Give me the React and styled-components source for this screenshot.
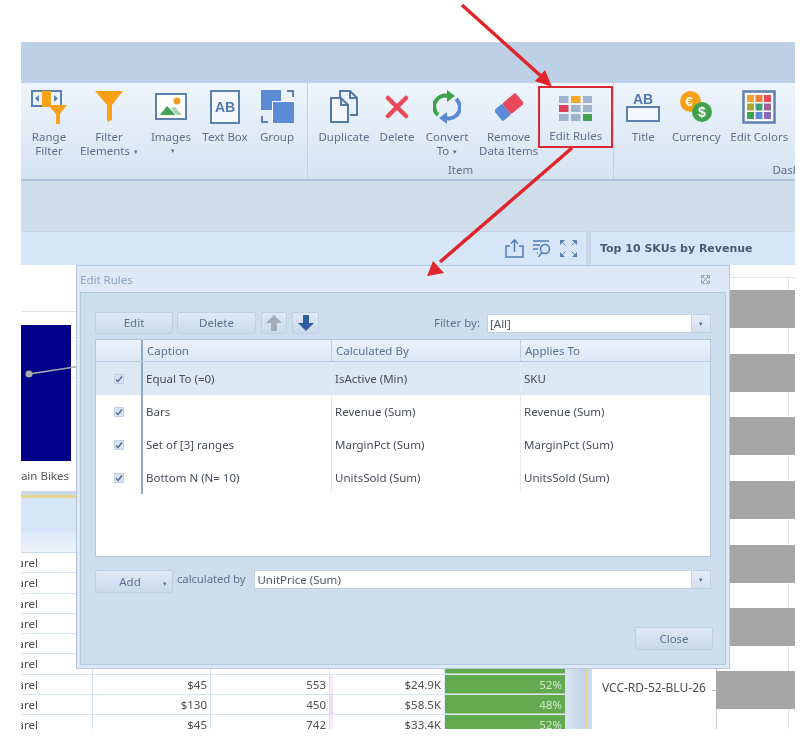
import React from "react";
import styled, { createGlobalStyle } from "styled-components";

const GlobalStyle = createGlobalStyle`
  html, body {
    margin: 0;
    background: #fff;
  }
  svg {
    display: block;
  }
`;

const FONT = `"Noto Sans", "Open Sans", sans-serif`;

const Page = styled.div`
  position: relative;
  width: 802px;
  height: 751px;
  padding: 42px 7px 22px 21px;
  box-sizing: border-box;
  overflow: hidden;
  background: #fff;
  font-family: ${FONT};
  font-size: 11.5px;
  filter: blur(0.4px);
`;
const Screen = styled.div`
  width: 774px;
  height: 687px;
  overflow: hidden;
  display: flex;
  flex-direction: column;
`;
const TitleBand = styled.div`
  flex: 0 0 41px;
  background: #bdd0e5;
`;
const Ribbon = styled.div`
  flex: 0 0 98px;
  box-sizing: border-box;
  display: flex;
  background: linear-gradient(#eef5fd, #d5e3f1);
  border-bottom: 2px solid #afc2d7;
`;
const Group = styled.div`
  flex: 0 0 ${({ $w }) => $w}px;
  box-sizing: border-box;
  display: flex;
  flex-direction: column;
  border-right: ${({ $open }) => ($open ? "none" : "1px solid #c3d3e4")};
`;
const Tools = styled.div`
  flex: 0 0 79px;
  display: flex;
  padding-left: ${({ $pad }) => $pad || 0}px;
`;
const Tool = styled.div`
  flex: 0 0 ${({ $w }) => $w}px;
  margin-left: ${({ $gap }) => $gap || 0}px;
  margin-top: ${({ $marked }) => ($marked ? 3 : 0)}px;
  height: ${({ $marked }) => ($marked ? "62px" : "auto")};
  box-sizing: border-box;
  border: ${({ $marked }) => ($marked ? "2px solid #dc2a35" : "none")};
  display: flex;
  flex-direction: column;
  align-items: center;
  color: #5f6f8a;
  line-height: 14px;
  text-align: center;
  white-space: nowrap;
`;
const ToolIcon = styled.div`
  height: ${({ $marked }) => ($marked ? 41 : 47)}px;
  display: flex;
  align-items: center;
  justify-content: center;
`;
const Caret = styled.span`
  font-size: 7px;
  margin-left: 4px;
  vertical-align: 1px;
`;
const GroupLabel = styled.div`
  text-align: center;
  color: #5f6f8a;
  line-height: 16px;
`;
const Band = styled.div`
  flex: 0 0 50px;
  background: #cfdcea;
`;
const Headers = styled.div`
  flex: 0 0 34px;
  display: flex;
  gap: 5px;
  background: #c9d9ea;
`;
const LeftHeader = styled.div`
  flex: 0 0 565px;
  box-sizing: border-box;
  padding-right: 9px;
  display: flex;
  align-items: center;
  justify-content: flex-end;
  gap: 8px;
  background: #d6e5f8;
  border-top: 1px solid #c5d5e7;
`;
const RightHeader = styled.div`
  flex: 1;
  box-sizing: border-box;
  padding-left: 9px;
  display: flex;
  align-items: center;
  background: #d6e5f8;
  border-top: 1px solid #c5d5e7;
  font-family: "DejaVu Sans", sans-serif;
  font-size: 11px;
  font-weight: 700;
  color: #4b5a72;
`;
const Panels = styled.div`
  flex: 1;
  display: flex;
  min-height: 0;
`;
const LeftPanel = styled.div`
  flex: 0 0 571px;
  display: flex;
  flex-direction: column;
`;
const ChartBox = styled.div`
  flex: 0 0 226px;
  position: relative;
  background: #fff;
  border-bottom: 4px solid #ccd9e8;
  box-sizing: content-box;
`;
const AxisLabel = styled.div`
  position: absolute;
  left: 0;
  width: 48px;
  top: 204px;
  overflow: hidden;
  direction: rtl;
  white-space: nowrap;
  color: #555;
  font-size: 11.5px;
  line-height: 14px;
`;
const GridFrame = styled.div`
  flex: 1;
  min-height: 0;
  display: flex;
  flex-direction: column;
  border-top: 3px solid #e8d58e;
  border-right: 2px solid #e8d58e;
  margin-right: 4px;
  overflow: hidden;
  box-shadow: 4px 0 0 #c9daec;
`;
const GridTitle = styled.div`
  flex: 0 0 34px;
  background: #d6e5f8;
`;
const GridHead = styled.div`
  flex: 0 0 21px;
  background: linear-gradient(#dde9f8, #edf3fb);
  border-bottom: 1px solid #c8d8ea;
  box-sizing: border-box;
`;
const GridBody = styled.div`
  flex: 1;
  display: flex;
  min-height: 0;
`;
const GridRows = styled.div`
  flex: 0 0 544px;
`;
const GridScroll = styled.div`
  flex: 1;
  background: linear-gradient(90deg, #d8e4f1, #c3d5e8);
`;
const DataRow = styled.div`
  height: 20.3px;
  box-sizing: border-box;
  display: grid;
  grid-template-columns: 72px 118px 119px 115px 120px;
  border-bottom: 1px solid #d8e4f7;
  color: #4d4d4d;
  font-size: 11.5px;
  line-height: 19px;
`;
const Cell = styled.div`
  position: relative;
  padding-right: 3px;
  text-align: right;
  border-right: 1px solid #d8e4f7;
  overflow: hidden;
  white-space: nowrap;
`;
const ClipCell = styled(Cell)`
  text-align: left;
  padding: 0;
  text-indent: -25px;
`;
const Bar = styled.i`
  position: absolute;
  left: 0;
  top: 0;
  bottom: 0;
  width: 3px;
  background: ${({ $shade }) => $shade};
`;
const PctCell = styled(Cell)`
  background: #62a94f;
  color: #cfe6c6;
  border-right: none;
  border-bottom: 1px solid #a9d09e;
`;
const RightPanel = styled.div`
  flex: 1;
  background: #fff;
  position: relative;
  min-width: 0;
`;
const SkuLabel = styled.div`
  position: absolute;
  left: 10px;
  top: 415px;
  color: #4d4d4d;
  font-size: 12px;
  line-height: 16px;
  white-space: nowrap;
`;

const Dialog = styled.div`
  position: absolute;
  left: 76px;
  top: 265px;
  width: 654px;
  height: 404px;
  box-sizing: border-box;
  padding: 0 3px 3px;
  display: flex;
  flex-direction: column;
  background: #dde9f6;
  border: 1px solid #b5c9de;
  z-index: 2;
`;
const DialogTitle = styled.div`
  flex: 0 0 26px;
  display: flex;
  align-items: center;
  justify-content: space-between;
  padding: 0 16px 0 0;
  color: #8ea3bf;
  font-size: 11.5px;
`;
const DialogBody = styled.div`
  flex: 1;
  min-height: 0;
  box-sizing: border-box;
  padding: 19px 14px 14px 14px;
  display: flex;
  flex-direction: column;
  background: #cdddec;
  border: 1px solid #b5c9de;
`;
const ToolRow = styled.div`
  flex: 0 0 22px;
  display: flex;
  align-items: center;
  gap: 5px;
  margin-bottom: 5px;
`;
const Button = styled.div`
  width: ${({ $w }) => $w}px;
  height: ${({ $h }) => $h || 22}px;
  margin-right: ${({ $mr }) => $mr || 0}px;
  padding-bottom: 1px;
  padding-right: ${({ $pr }) => $pr || 0}px;
  box-sizing: border-box;
  display: flex;
  align-items: center;
  justify-content: center;
  position: relative;
  background: linear-gradient(#dfe9f5, #cad9ea);
  border: 1px solid #bfd0e3;
  border-radius: 2px;
  color: #5c7090;
  font-size: 11.5px;
`;
const AddCaret = styled.span`
  position: absolute;
  right: 5px;
  top: 9px;
  font-size: 7px;
  line-height: 7px;
`;
const FilterLabel = styled.span`
  margin-left: auto;
  margin-right: 2px;
  padding-bottom: 1px;
  color: #5e7395;
`;
const Combo = styled.div`
  flex: ${({ $w }) => ($w ? `0 0 ${$w}px` : 1)};
  height: 19px;
  box-sizing: border-box;
  display: flex;
  align-items: center;
  background: #fff;
  border: 1px solid #bfd0e3;
  color: #4d5766;
  padding-left: 2px;
  line-height: 17px;
`;
const ComboText = styled.span`
  flex: 1;
`;
const ComboButton = styled.span`
  flex: 0 0 18px;
  align-self: stretch;
  display: flex;
  align-items: center;
  justify-content: center;
  background: linear-gradient(#e4edf7, #d1dfed);
  border-left: 1px solid #c6d6e7;
  font-size: 7px;
  color: #5c7090;
`;
const RulesGrid = styled.div`
  flex: 0 0 218px;
  box-sizing: border-box;
  background: #fff;
  border: 1px solid #b5c9de;
`;
const RuleRow = styled.div`
  display: grid;
  grid-template-columns: 45px 190px 189px 1fr;
  height: ${({ $head }) => ($head ? 21 : 33)}px;
  background: ${({ $head, $active }) =>
    $head ? "linear-gradient(#eaf2fb, #dce8f5)" : $active ? "#dce8f4" : "#fff"};
  border-bottom: ${({ $head }) => ($head ? "1px solid #b9cde3" : "none")};
  color: ${({ $head }) => ($head ? "#5b7090" : "#464c58")};
  align-items: stretch;
`;
const RuleCheck = styled.div`
  display: flex;
  align-items: center;
  justify-content: center;
`;
const Tick = styled.span`
  width: 10px;
  height: 10px;
  box-sizing: border-box;
  display: flex;
  align-items: center;
  justify-content: center;
  background: #d8e2ef;
  border: 1px solid #c3d1e2;
`;
const RuleCell = styled.div`
  display: flex;
  align-items: center;
  padding-left: ${({ $head }) => ($head ? 4 : 3)}px;
  padding-bottom: 1px;
  border-left: ${({ $strong, $head }) =>
    $strong ? "2px solid #8ea8c9" : $head ? "1px solid #b9cde3" : "1px solid #e3ecf6"};
`;
const AddRow = styled.div`
  flex: 0 0 23px;
  margin-top: 13px;
  display: flex;
  align-items: flex-start;
  gap: 4px;
`;
const AddLabel = styled.span`
  margin-right: 5px;
  color: #5e7395;
  line-height: 17px;
  letter-spacing: -0.15px;
`;
const Footer = styled.div`
  margin-top: auto;
  margin-right: -2px;
  display: flex;
  justify-content: flex-end;
`;
const ArrowLayer = styled.svg`
  position: absolute;
  left: 0;
  top: 0;
  z-index: 3;
  pointer-events: none;
`;

const BLUE = "#5e80ae";

const RangeIcon = () => (
  <svg width="38" height="36" viewBox="0 0 38 36">
    <rect x="2" y="2" width="29" height="15" fill="#eef4fb" stroke={BLUE} strokeWidth="2" />
    <rect x="12" y="2" width="9" height="16" fill="#f9a21b" />
    <path d="M9 6v7l-4-3.5zM24 6v7l4-3.5z" fill={BLUE} />
    <path d="M18 16h19l-7 9v10h-4V25z" fill="#f9a21b" />
  </svg>
);
const FunnelIcon = () => (
  <svg width="28" height="33" viewBox="0 0 28 33">
    <path d="M0 1h28L17 15v15l-5 2V15z" fill="#fba016" />
  </svg>
);
const ImageIcon = () => (
  <svg width="32" height="28" viewBox="0 0 32 28">
    <rect x="1" y="1" width="30" height="25" fill="#fff" stroke={BLUE} strokeWidth="2" />
    <circle cx="22" cy="8" r="3.5" fill="#f59a23" />
    <path d="M5 22l7-9 6 6 2 3z" fill="#46a35a" />
    <path d="M16 15l4-1 7 8h-6z" fill="#a8d4b0" />
  </svg>
);
const TextBoxIcon = () => (
  <svg width="30" height="34" viewBox="0 0 30 34">
    <rect x="1" y="1" width="28" height="32" fill="#f4f8fd" stroke={BLUE} strokeWidth="2" />
    <text x="15" y="22" textAnchor="middle" fontFamily="Liberation Sans" fontWeight="700" fontSize="14" fill="#5278ae">AB</text>
  </svg>
);
const GroupIcon = () => (
  <svg width="33" height="33" viewBox="0 0 33 33">
    <rect x="0" y="0" width="20" height="20" fill="#5b8ad6" />
    <rect x="11" y="11" width="22" height="22" fill="#fff" />
    <rect x="12" y="12" width="21" height="21" fill="#5b8ad6" />
    <path d="M26 1h6v6M1 26v6h6" fill="none" stroke={BLUE} strokeWidth="2" />
  </svg>
);
const DuplicateIcon = () => (
  <svg width="28" height="33" viewBox="0 0 28 33">
    <path d="M10 7V1h10l7 7v17h-7M20 1v7h7" fill="none" stroke="#5578a8" strokeWidth="2" />
    <path d="M1 8h10l7 7v17H1zM11 8v7h7" fill="#f4f8fd" stroke="#5578a8" strokeWidth="2" />
  </svg>
);
const DeleteIcon = () => (
  <svg width="24" height="24" viewBox="0 0 24 24">
    <path d="M3 3l18 18M21 3L3 21" stroke="#e8485a" strokeWidth="4.5" strokeLinecap="round" />
  </svg>
);
const ConvertIcon = () => (
  <svg width="28" height="34" viewBox="0 0 28 34">
    <path d="M5 25A11 11 0 0 1 15 6" fill="none" stroke="#3ea24c" strokeWidth="4" />
    <path d="M14 0l8 6-8 6z" fill="#3ea24c" />
    <path d="M23 9A11 11 0 0 1 13 28" fill="none" stroke="#5b8ad6" strokeWidth="4" />
    <path d="M14 22l-8 6 8 6z" fill="#5b8ad6" />
  </svg>
);
const EraserIcon = () => (
  <svg width="28" height="28" viewBox="0 0 28 28">
    <g transform="rotate(-40 14 14)">
      <rect x="0" y="7" width="11" height="14" rx="1.5" fill="#5b8ad6" />
      <rect x="11" y="7" width="17" height="14" rx="1.5" fill="#e8485a" />
    </g>
  </svg>
);
const RULE_CELLS = ["#a0b3cc", "#f5a623", "#a0b3cc", "#e0405a", "#a0b3cc", "#a0b3cc", "#a0b3cc", "#a0b3cc", "#3ea24c"];
const RulesIcon = () => (
  <svg width="33" height="25" viewBox="0 0 33 25">
    {RULE_CELLS.map((c, i) => (
      <rect key={i} x={(i % 3) * 12} y={Math.floor(i / 3) * 9} width="9.5" height="7" fill={c} />
    ))}
  </svg>
);
const TitleIcon = () => (
  <svg width="34" height="30" viewBox="0 0 34 30">
    <text x="17" y="12" textAnchor="middle" fontFamily="Liberation Sans" fontWeight="700" fontSize="14" fill="#5278ae">AB</text>
    <rect x="1" y="15" width="32" height="14" fill="#f4f8fd" stroke={BLUE} strokeWidth="2" />
  </svg>
);
const CurrencyIcon = () => (
  <svg width="32" height="31" viewBox="0 0 32 31">
    <circle cx="10.500" cy="10.500" r="10.500" fill="#f7a11b" />
    <text x="9" y="15" textAnchor="middle" fontFamily="Liberation Sans" fontWeight="700" fontSize="13" fill="#fff">€</text>
    <circle cx="22" cy="21" r="10" fill="#3ea24c" />
    <text x="22" y="26" textAnchor="middle" fontFamily="Liberation Sans" fontWeight="700" fontSize="14" fill="#fff">$</text>
  </svg>
);
const COLOR_CELLS = ["#f5a02a", "#ee7a3a", "#e8485a", "#a9a52f", "#3f9e7a", "#a0609a", "#3ea24c", "#5b8ad6", "#8a6ab8"];
const ColorsIcon = () => (
  <svg width="34" height="34" viewBox="0 0 34 34">
    <rect x="1.5" y="1.5" width="31" height="31" fill="#fff" stroke={BLUE} strokeWidth="2.5" />
    {COLOR_CELLS.map((c, i) => (
      <rect key={i} x={5 + (i % 3) * 8.5} y={5 + Math.floor(i / 3) * 8.5} width="7" height="7" fill={c} />
    ))}
  </svg>
);
const ShareIcon = () => (
  <svg width="19" height="19" viewBox="0 0 19 19" fill="none" stroke="#4f7db5" strokeWidth="1.5">
    <path d="M5 7H1v11h17V7h-4M9.5 13V1M6 4.5L9.5 1 13 4.5" />
  </svg>
);
const SearchListIcon = () => (
  <svg width="20" height="18" viewBox="0 0 20 18" fill="none" stroke="#4f7db5" strokeWidth="1.5">
    <path d="M1 1h16M1 5h7M1 9h5M5 13h1" />
    <circle cx="13" cy="9" r="4.5" />
    <path d="M10 12.500L6.500 17" />
  </svg>
);
const ExpandIcon = () => (
  <svg width="17" height="17" viewBox="0 0 17 17" fill="#5c82b2">
    <path d="M0 0h5L0 5zM17 0v5l-5-5zM0 17v-5l5 5zM17 17h-5l5-5z" />
    <path d="M2 2l3.500 3.500M15 2l-3.500 3.500M2 15l3.500-3.500M15 15l-3.500-3.500" stroke="#5c82b2" strokeWidth="1" />
  </svg>
);
const UpArrow = ({ color }) => (
  <svg width="18" height="18" viewBox="0 0 18 18">
    <path d="M9 1l8 8h-5v8H6V9H1z" fill={color} />
  </svg>
);
const DownArrow = ({ color }) => (
  <svg width="18" height="18" viewBox="0 0 18 18">
    <path d="M9 17L1 9h5V1h6v8h5z" fill={color} />
  </svg>
);
const CloseGlyph = () => (
  <svg width="9" height="9" viewBox="0 0 9 9" fill="none" stroke="#93a6bd" strokeWidth="1">
    <path d="M.5.5h3L.5 3.500zM8.500.5h-3l3 3zM.5 8.500h3l-3-3zM8.500 8.500h-3l3-3zM2 2l5 5M7 2L2 7" />
  </svg>
);
const CheckMark = () => (
  <svg width="8" height="8" viewBox="0 0 8 8" fill="none" stroke="#4e6a92" strokeWidth="1.400">
    <path d="M1 4.500L3 6.500 7 1.500" />
  </svg>
);

const RULES = [
  ["Equal To (=0)", "IsActive (Min)", "SKU"],
  ["Bars", "Revenue (Sum)", "Revenue (Sum)"],
  ["Set of [3] ranges", "MarginPct (Sum)", "MarginPct (Sum)"],
  ["Bottom N (N= 10)", "UnitsSold (Sum)", "UnitsSold (Sum)"],
];

// the first six rows sit under the dialog, only their first column shows
const COVERED = ["", "", "", "", "#fff"];
const ROWS = [
  COVERED,
  COVERED,
  COVERED,
  COVERED,
  COVERED,
  COVERED,
  ["$45", "553", "$24.9K", "52%", "#f6e9f8"],
  ["$130", "450", "$58.5K", "48%", "#f3d9f3"],
  ["$45", "742", "$33.4K", "52%", "#f6e9f8"],
];

const BAR_ROWS = [25, 89, 152, 216, 280, 343];

const App = () => {
  return (
    <Page>
      <GlobalStyle />
      <Screen>
        <TitleBand />
        <Ribbon>
          <Group $w={287}>
            <Tools>
              <Tool $w={56}><ToolIcon><RangeIcon /></ToolIcon>Range<br />Filter</Tool>
              <Tool $w={64}><ToolIcon><FunnelIcon /></ToolIcon>Filter<br /><span>Elements<Caret>▾</Caret></span></Tool>
              <Tool $w={60}><ToolIcon><ImageIcon /></ToolIcon>Images<Caret>▾</Caret></Tool>
              <Tool $w={48}><ToolIcon><TextBoxIcon /></ToolIcon>Text Box</Tool>
              <Tool $w={56}><ToolIcon><GroupIcon /></ToolIcon>Group</Tool>
            </Tools>
          </Group>
          <Group $w={304}>
            <Tools $pad={8}>
              <Tool $w={56}><ToolIcon><DuplicateIcon /></ToolIcon>Duplicate</Tool>
              <Tool $w={50}><ToolIcon><DeleteIcon /></ToolIcon>Delete</Tool>
              <Tool $w={50}><ToolIcon><ConvertIcon /></ToolIcon>Convert<br /><span>To<Caret>▾</Caret></span></Tool>
              <Tool $w={58} $gap={7}><ToolIcon><EraserIcon /></ToolIcon>Remove<br />Data Items</Tool>
              <Tool $w={75} $marked><ToolIcon $marked><RulesIcon /></ToolIcon>Edit Rules</Tool>
            </Tools>
            <GroupLabel>Item</GroupLabel>
          </Group>
          <Group $w={376} $open>
            <Tools $pad={6}>
              <Tool $w={46}><ToolIcon><TitleIcon /></ToolIcon>Title</Tool>
              <Tool $w={60}><ToolIcon><CurrencyIcon /></ToolIcon>Currency</Tool>
              <Tool $w={66}><ToolIcon><ColorsIcon /></ToolIcon>Edit Colors</Tool>
            </Tools>
            <GroupLabel>Dashboard</GroupLabel>
          </Group>
        </Ribbon>
        <Band />
        <Headers>
          <LeftHeader>
            <ShareIcon />
            <SearchListIcon />
            <ExpandIcon />
          </LeftHeader>
          <RightHeader>Top 10 SKUs by Revenue</RightHeader>
        </Headers>
        <Panels>
          <LeftPanel>
            <ChartBox>
              <svg width="565" height="226" viewBox="0 0 565 226">
                <path d="M0 46.500H565" stroke="#e0e0e0" />
                <path d="M0 72.500H565M0 113.500H565" stroke="#eeeeee" />
                <rect x="0" y="60" width="50" height="136" fill="#00008b" />
                <path d="M8 109L60 101" stroke="#a8a8a8" strokeWidth="1.500" />
                <circle cx="8" cy="109" r="3.500" fill="#a8a8a8" />
              </svg>
              <AxisLabel>Mountain Bikes</AxisLabel>
            </ChartBox>
            <GridFrame>
              <GridTitle />
              <GridHead />
              <GridBody>
                <GridRows>
                  {ROWS.map((row, i) => (
                    <DataRow key={i}>
                      <ClipCell>Apparel</ClipCell>
                      <Cell>{row[0]}</Cell>
                      <Cell>{row[1]}</Cell>
                      <Cell><Bar $shade={row[4]} />{row[2]}</Cell>
                      <PctCell>{row[3]}</PctCell>
                    </DataRow>
                  ))}
                </GridRows>
                <GridScroll />
              </GridBody>
            </GridFrame>
          </LeftPanel>
          <RightPanel>
            <svg width="203" height="464" viewBox="0 0 203 464">
              <path d="M124 12.500H203" stroke="#e4e4e4" />
              <path d="M196.500 12V464" stroke="#e4e4e4" />
              <path d="M124.500 0V464" stroke="#cfcfcf" />
              {BAR_ROWS.map((y) => (
                <rect key={y} x="124" y={y} width="79" height="38" fill="#a6a6a6" />
              ))}
              <rect x="124" y="406" width="79" height="38" fill="#a6a6a6" />
              <path d="M120 425.500h4" stroke="#bbb" />
            </svg>
            <SkuLabel>VCC-RD-52-BLU-26</SkuLabel>
          </RightPanel>
        </Panels>
      </Screen>

      <Dialog>
        <DialogTitle>
          Edit Rules
          <CloseGlyph />
        </DialogTitle>
        <DialogBody>
          <ToolRow>
            <Button $w={78} $mr={-1}>Edit</Button>
            <Button $w={79}>Delete</Button>
            <Button $w={26}><UpArrow color="#a3adb8" /></Button>
            <Button $w={27}><DownArrow color="#2f5d9f" /></Button>
            <FilterLabel>Filter by:</FilterLabel>
            <Combo $w={224}>
              <ComboText>[All]</ComboText>
              <ComboButton>▾</ComboButton>
            </Combo>
          </ToolRow>
          <RulesGrid>
            <RuleRow $head>
              <RuleCheck />
              <RuleCell $head $strong>Caption</RuleCell>
              <RuleCell $head>Calculated By</RuleCell>
              <RuleCell $head>Applies To</RuleCell>
            </RuleRow>
            {RULES.map((rule, i) => (
              <RuleRow key={rule[0]} $active={i === 0}>
                <RuleCheck><Tick><CheckMark /></Tick></RuleCheck>
                <RuleCell $strong>{rule[0]}</RuleCell>
                <RuleCell>{rule[1]}</RuleCell>
                <RuleCell>{rule[2]}</RuleCell>
              </RuleRow>
            ))}
          </RulesGrid>
          <AddRow>
            <Button $w={78} $h={23} $pr={8}>Add<AddCaret>▾</AddCaret></Button>
            <AddLabel>calculated by</AddLabel>
            <Combo>
              <ComboText>UnitPrice (Sum)</ComboText>
              <ComboButton>▾</ComboButton>
            </Combo>
          </AddRow>
          <Footer>
            <Button $w={78} $h={23}>Close</Button>
          </Footer>
        </DialogBody>
      </Dialog>

      <ArrowLayer width="802" height="751" viewBox="0 0 802 751">
        <path d="M462 5L542 77" stroke="#e0252b" strokeWidth="3.5" />
        <path d="M552 87L535 81 545 70z" fill="#e0252b" />
        <path d="M572 148L440 262" stroke="#e0252b" strokeWidth="3.5" />
        <path d="M427 276L433 261 444 273z" fill="#e0252b" />
      </ArrowLayer>
    </Page>
  );
};

export default App;
